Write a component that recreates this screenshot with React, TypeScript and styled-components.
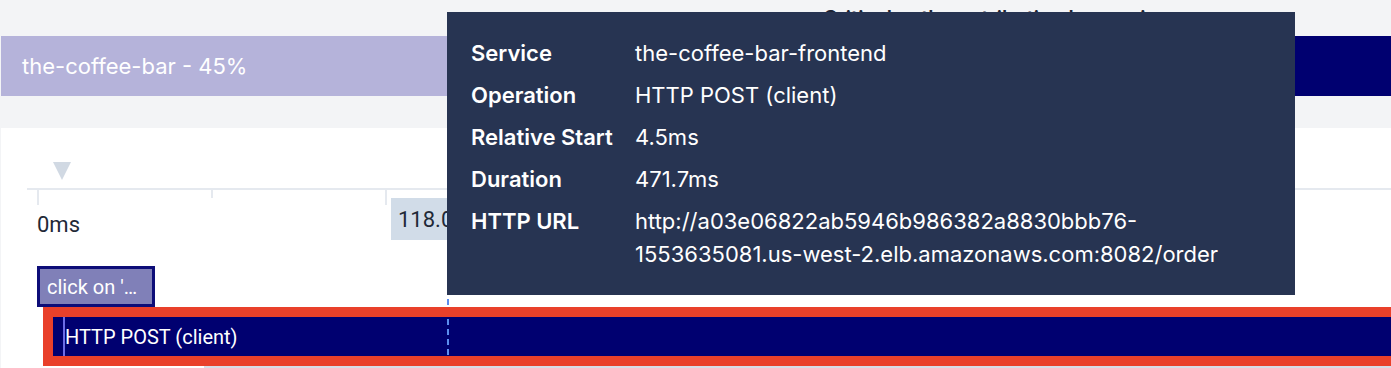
import { FC, Fragment } from "react";
import styled, { createGlobalStyle } from "styled-components";

const GlobalStyle = createGlobalStyle`
  html, body {
    margin: 0;
    padding: 0;
  }
  body {
    background: #f3f4f6;
    font-family: Inter, "Liberation Sans", sans-serif;
    overflow: hidden;
  }
`;

const Page = styled.div`
  position: relative;
  height: 368px;
  overflow: hidden;
  padding-left: 1px;
  display: flex;
  flex-direction: column;
`;

const Summary = styled.section`
  flex: none;
  height: 128px;
  display: flex;
  flex-direction: column;
`;

const SummaryHeader = styled.div`
  height: 36px;
  display: grid;
  grid-template-columns: 822px 1fr;
`;

const SummaryTitle = styled.h3`
  grid-column: 2;
  margin: 0;
  padding-top: 4px;
  font-size: 20px;
  line-height: 28px;
  font-weight: 600;
  color: #1e2433;
  white-space: nowrap;
`;

const StackedBar = styled.div`
  display: flex;
  height: 60px;
`;

const Segment = styled.div<{ $color: string; $width?: string }>`
  background: ${({ $color }) => $color};
  ${({ $width }) => ($width ? `width: ${$width}; flex: none;` : "flex: 1;")}
  display: flex;
  align-items: center;
  padding-left: 21px;
  box-sizing: border-box;
  color: #fff;
  font-size: 22px;
  white-space: nowrap;
`;

const Timeline = styled.section`
  flex: 1;
  background: #fff;
  display: flex;
  flex-direction: column;
  overflow: hidden;
  font-family: Roboto, "Liberation Sans", sans-serif;
`;

const Marker = styled.div`
  margin: 34px 0 8px 52px;
  width: 0;
  height: 0;
  border-left: 9.5px solid transparent;
  border-right: 9.5px solid transparent;
  border-top: 18px solid #d1d9e3;
`;

const Axis = styled.div`
  margin-left: 26px;
  border-top: 2px solid #e5e9ef;
  padding-left: 10px;
`;

const TickRow = styled.div`
  display: flex;
  height: 15px;
`;

const Tick = styled.div<{ $major: boolean }>`
  flex: none;
  width: 174px;
  height: ${({ $major }) => ($major ? 15 : 8)}px;
  border-left: 2px solid #e5e9ef;
  box-sizing: border-box;
`;

const LabelRow = styled.div`
  display: flex;
  align-items: flex-start;
  margin-top: -7px;
  height: 43px;
`;

const LabelCell = styled.div`
  flex: none;
  width: 348px;
`;

const TickLabel = styled.span<{ $active?: boolean }>`
  display: inline-block;
  white-space: nowrap;
  color: #1f2937;
  font-size: 22px;
  ${({ $active }) =>
    $active
      ? `
    margin-left: 6px;
    padding: 9px 7px 8px;
    background: #d1dce8;
  `
      : `
    padding-top: 14px;
  `}
`;

const SpanList = styled.div`
  margin-top: 25px;
  display: flex;
  flex-direction: column;
  align-items: flex-start;
`;

const ParentSpan = styled.div`
  margin-left: 36px;
  width: 118px;
  height: 41px;
  box-sizing: border-box;
  border: 3px solid #0d0d78;
  background: #8080b8;
  color: #fff;
  font-size: 20px;
  padding-left: 7px;
  display: flex;
  align-items: center;
  white-space: nowrap;
  overflow: hidden;
`;

const SelectedSpan = styled.div`
  position: relative;
  margin-left: 42px;
  width: 1400px;
  height: 59px;
  box-sizing: border-box;
  padding: 10px 0 10px 20px;
  background: #000070;
  display: flex;

  &::after {
    content: "";
    position: absolute;
    inset: 0;
    border: 10px solid #e9402a;
    z-index: 2;
    pointer-events: none;
  }
`;

const SpanName = styled.div`
  display: flex;
  align-items: center;
  border-left: 2px solid #6c6ce6;
  color: #fff;
  font-size: 20px;
  white-space: nowrap;
`;

const NextSpan = styled.div`
  margin-left: 203px;
  width: 1300px;
  height: 20px;
  background: #d6dde7;
`;

const Cursor = styled.div`
  position: absolute;
  left: 447px;
  top: 129px;
  bottom: 0;
  width: 2px;
  background: repeating-linear-gradient(
    to bottom,
    #5b8def 0 6px,
    transparent 6px 10px
  );
  z-index: 1;
`;

const Tooltip = styled.div`
  position: absolute;
  left: 447px;
  top: 12px;
  width: 848px;
  box-sizing: border-box;
  padding: 25px 24px 24px;
  background: #273452;
  color: #fff;
  z-index: 3;
  display: grid;
  grid-template-columns: 164px 1fr;
  row-gap: 9px;
  font-size: 22px;
  line-height: 33px;
`;

const TooltipKey = styled.div`
  font-weight: 600;
  white-space: nowrap;
`;

const TooltipValue = styled.div``;

const details = [
  { key: "Service", value: "the-coffee-bar-frontend" },
  { key: "Operation", value: "HTTP POST (client)" },
  { key: "Relative Start", value: "4.5ms" },
  { key: "Duration", value: "471.7ms" },
  {
    key: "HTTP URL",
    value:
      "http://a03e06822ab5946b986382a8830bbb76-1553635081.us-west-2.elb.amazonaws.com:8082/order",
  },
];

const ticks = Array.from({ length: 8 }, (_, i) => i);
const labels = [
  { text: "0ms", active: false },
  { text: "118.0ms", active: true },
  { text: "235.9ms", active: false },
  { text: "353.9ms", active: false },
];

const App: FC = () => {
  return (
    <>
      <GlobalStyle />
      <Page>
        <Summary>
          <SummaryHeader>
            <SummaryTitle>Critical path contribution by service</SummaryTitle>
          </SummaryHeader>
          <StackedBar>
            <Segment $color="#b5b3da" $width="45%">
              the-coffee-bar - 45%
            </Segment>
            <Segment $color="#000070" />
          </StackedBar>
        </Summary>
        <Timeline>
          <Marker />
          <Axis>
            <TickRow>
              {ticks.map((i) => (
                <Tick key={i} $major={i % 2 === 0} />
              ))}
            </TickRow>
            <LabelRow>
              {labels.map((l) => (
                <LabelCell key={l.text}>
                  <TickLabel $active={l.active}>{l.text}</TickLabel>
                </LabelCell>
              ))}
            </LabelRow>
          </Axis>
          <SpanList>
            <ParentSpan>click on '…</ParentSpan>
            <SelectedSpan>
              <SpanName>HTTP POST (client)</SpanName>
            </SelectedSpan>
            <NextSpan />
          </SpanList>
        </Timeline>
        <Cursor />
        <Tooltip>
          {details.map((d) => (
            <Fragment key={d.key}>
              <TooltipKey>{d.key}</TooltipKey>
              <TooltipValue>{d.value}</TooltipValue>
            </Fragment>
          ))}
        </Tooltip>
      </Page>
    </>
  );
};

export default App;
